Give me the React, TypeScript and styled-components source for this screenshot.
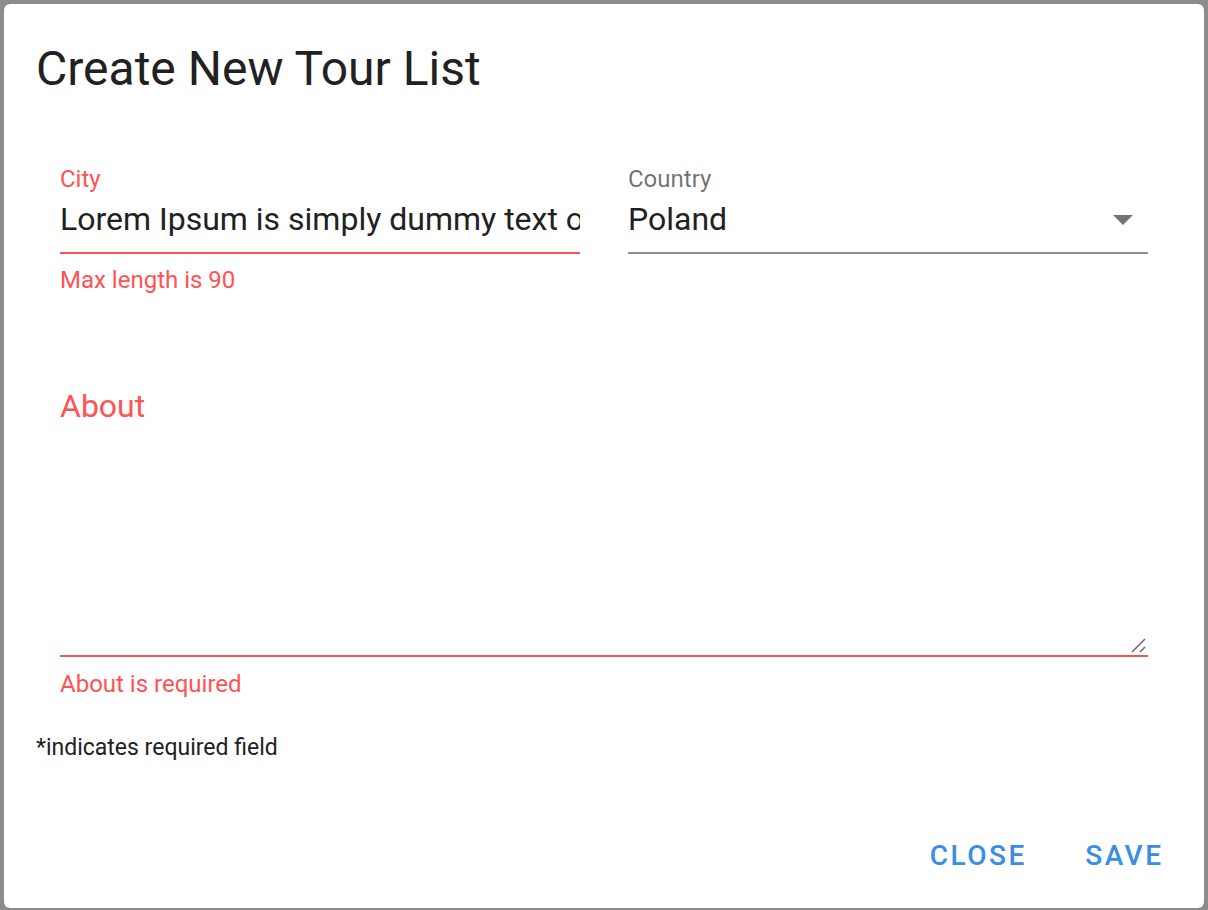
import React from "react";
import styled, { createGlobalStyle } from "styled-components";

const Global = createGlobalStyle`
  html, body { margin: 0; padding: 0; }
  body {
    background: #8c8c8c;
    font-family: Roboto, "Noto Sans", Arial, sans-serif;
    -webkit-font-smoothing: antialiased;
  }
  * { box-sizing: border-box; }
`;

const Backdrop = styled.div`
  width: 1208px;
  height: 910px;
  padding: 4px 4px 2px 4px;
  display: flex;
`;

const Dialog = styled.div`
  width: 1200px;
  height: 904px;
  background: #fff;
  border-radius: 6px;
  display: flex;
  flex-direction: column;
  padding-top: 37px;
`;

const Title = styled.h1`
  margin: 0;
  padding: 0 32px;
  font-size: 48px;
  line-height: 56px;
  font-weight: 400;
  color: #212121;
  letter-spacing: 0;
`;

const Form = styled.div`
  padding: 68px 56px 0 56px;
  display: flex;
  flex-direction: column;
`;

const Row = styled.div`
  display: grid;
  grid-template-columns: 1fr 1fr;
  column-gap: 48px;
`;

const Field = styled.div`
  display: flex;
  flex-direction: column;
  min-width: 0;
`;

const Label = styled.label<{ $error?: boolean }>`
  font-size: 24px;
  line-height: 28px;
  color: ${(p) => (p.$error ? "#ff5252" : "rgba(0,0,0,0.56)")};
`;

const InputLine = styled.div<{ $error?: boolean }>`
  margin-top: 6px;
  display: flex;
  align-items: center;
  padding-bottom: 13px;
  border-bottom: 2px solid ${(p) => (p.$error ? "#ff5252" : "#8f8f8f")};
`;

const Value = styled.div`
  flex: 1;
  min-width: 0;
  font-size: 32px;
  line-height: 40px;
  color: #212121;
  white-space: nowrap;
  overflow: hidden;
`;

const Caret = styled.div`
  width: 0;
  height: 0;
  border-left: 10px solid transparent;
  border-right: 10px solid transparent;
  border-top: 10px solid #737373;
  margin-right: 15px;
  margin-top: 2px;
`;

const Hint = styled.div`
  margin-top: 12px;
  font-size: 24px;
  line-height: 28px;
  color: #ff5252;
  min-height: 28px;
`;

const AreaField = styled.div`
  margin-top: 92px;
  display: flex;
  flex-direction: column;
`;

const BigLabel = styled.label`
  font-size: 32px;
  line-height: 40px;
  color: #ff5252;
`;

const AreaBox = styled.div`
  position: relative;
  height: 231px;
  border-bottom: 2px solid #ff5252;
`;

const Grip = styled.svg`
  position: absolute;
  right: 1px;
  bottom: 2px;
`;

const AreaHint = styled(Hint)`
  margin-top: 13px;
`;

const Note = styled.div`
  padding: 37px 32px 0 32px;
  font-size: 23px;
  line-height: 26px;
  color: #212121;
`;

const Actions = styled.div`
  margin-top: auto;
  padding: 0 43px 34px 0;
  display: flex;
  justify-content: flex-end;
  gap: 61px;
`;

const Button = styled.button`
  border: none;
  background: none;
  padding: 0;
  font-family: Roboto, "Noto Sans", Arial, sans-serif;
  font-size: 28px;
  line-height: 36px;
  font-weight: 500;
  letter-spacing: 2.5px;
  margin-right: -2.5px;
  color: #3a8de4;
  text-transform: uppercase;
  cursor: pointer;
`;

export default function App() {
  return (
    <>
      <Global />
      <Backdrop>
        <Dialog>
          <Title>Create New Tour List</Title>
          <Form>
            <Row>
              <Field>
                <Label $error>City</Label>
                <InputLine $error>
                  <Value>
                    Lorem Ipsum is simply dummy text of the printing and typesetting industry.
                  </Value>
                </InputLine>
                <Hint>Max length is 90</Hint>
              </Field>
              <Field>
                <Label>Country</Label>
                <InputLine>
                  <Value>Poland</Value>
                  <Caret />
                </InputLine>
                <Hint />
              </Field>
            </Row>
            <AreaField>
              <BigLabel>About</BigLabel>
              <AreaBox>
                <Grip width="16" height="16" viewBox="0 0 16 16">
                  <line x1="1" y1="15" x2="14" y2="2" stroke="#6f6f6f" strokeWidth="1.6" />
                  <line x1="9" y1="15" x2="14" y2="10" stroke="#6f6f6f" strokeWidth="1.6" />
                </Grip>
              </AreaBox>
              <AreaHint>About is required</AreaHint>
            </AreaField>
          </Form>
          <Note>*indicates required field</Note>
          <Actions>
            <Button>Close</Button>
            <Button>Save</Button>
          </Actions>
        </Dialog>
      </Backdrop>
    </>
  );
}
